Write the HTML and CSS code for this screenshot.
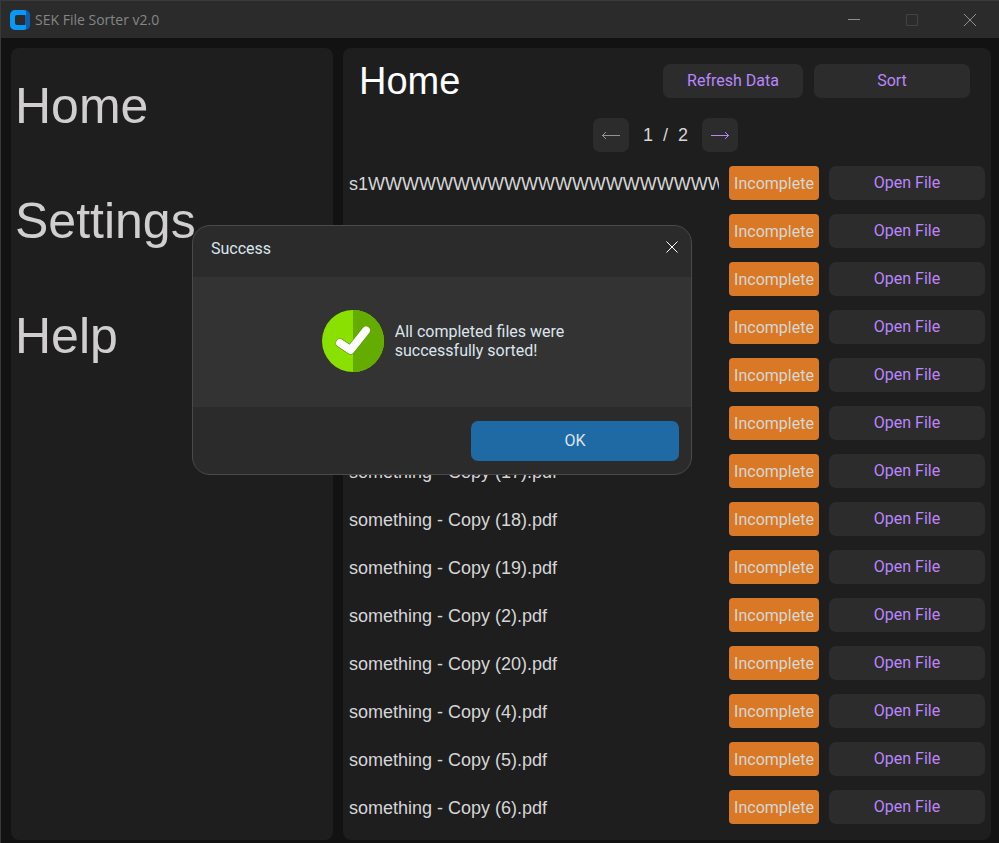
FILE: index.html
```html
<!DOCTYPE html>
<html lang="en">
<head>
<meta charset="utf-8">
<title>SEK File Sorter v2.0</title>
<link rel="stylesheet" href="styles.css">
</head>
<body>
<div class="window">
  <header class="titlebar">
    <svg class="logo" viewBox="0 0 20 20" aria-hidden="true">
      <path d="M12 0h3a5 5 0 0 1 5 5v10a5 5 0 0 1-5 5h-3z" fill="#0b5fae"/>
      <path d="M5 0h9a2 2 0 0 1 2 2v2.500a1 1 0 0 1-1 1v9a1 1 0 0 1 1 1V18a2 2 0 0 1-2 2H5a5 5 0 0 1-5-5V5a5 5 0 0 1 5-5z" fill="#0a98f8"/>
      <path d="M7 5h8v10H7a2 2 0 0 1-2-2V7a2 2 0 0 1 2-2z" fill="#2b2b2b"/>
    </svg>
    <span class="app-name">SEK File Sorter v2.0</span>
    <button class="win-btn" type="button" aria-label="Minimize"><svg viewBox="0 0 12 12"><path d="M0 5.5h12"/></svg></button>
    <button class="win-btn" type="button" aria-label="Maximize" disabled><svg viewBox="0 0 12 12"><path d="M.5.5h11v11H.5z"/></svg></button>
    <button class="win-btn" type="button" aria-label="Close"><svg viewBox="0 0 12 12"><path d="M0 0l12 12M12 0L0 12"/></svg></button>
  </header>
  <div class="content">
    <nav class="sidebar">
      <a href="#home">Home</a>
      <a href="#settings">Settings</a>
      <a href="#help">Help</a>
    </nav>
    <main class="main">
      <div class="toolbar">
        <h1>Home</h1>
        <button class="btn refresh" type="button">Refresh Data</button>
        <button class="btn" type="button">Sort</button>
      </div>
      <div class="pager">
        <button class="btn page" type="button" aria-label="Previous page" disabled><svg viewBox="0 0 18 8"><path d="M0 4.5h18M4 1L.5 4.5 4 8"/></svg></button>
        <span>1&nbsp; /&nbsp; 2</span>
        <button class="btn page" type="button" aria-label="Next page"><svg viewBox="0 0 18 8"><path d="M0 4.5h18M14 1l3.5 3.5L14 8"/></svg></button>
      </div>
      <ul class="files">
        <li><span class="name">s1WWWWWWWWWWWWWWWWWWWWWWWW</span><span class="status">Incomplete</span><button class="btn" type="button">Open File</button></li>
        <li><span class="name">something - Copy (12).pdf</span><span class="status">Incomplete</span><button class="btn" type="button">Open File</button></li>
        <li><span class="name">something - Copy (13).pdf</span><span class="status">Incomplete</span><button class="btn" type="button">Open File</button></li>
        <li><span class="name">something - Copy (14).pdf</span><span class="status">Incomplete</span><button class="btn" type="button">Open File</button></li>
        <li><span class="name">something - Copy (15).pdf</span><span class="status">Incomplete</span><button class="btn" type="button">Open File</button></li>
        <li><span class="name">something - Copy (16).pdf</span><span class="status">Incomplete</span><button class="btn" type="button">Open File</button></li>
        <li><span class="name">something - Copy (17).pdf</span><span class="status">Incomplete</span><button class="btn" type="button">Open File</button></li>
        <li><span class="name">something - Copy (18).pdf</span><span class="status">Incomplete</span><button class="btn" type="button">Open File</button></li>
        <li><span class="name">something - Copy (19).pdf</span><span class="status">Incomplete</span><button class="btn" type="button">Open File</button></li>
        <li><span class="name">something - Copy (2).pdf</span><span class="status">Incomplete</span><button class="btn" type="button">Open File</button></li>
        <li><span class="name">something - Copy (20).pdf</span><span class="status">Incomplete</span><button class="btn" type="button">Open File</button></li>
        <li><span class="name">something - Copy (4).pdf</span><span class="status">Incomplete</span><button class="btn" type="button">Open File</button></li>
        <li><span class="name">something - Copy (5).pdf</span><span class="status">Incomplete</span><button class="btn" type="button">Open File</button></li>
        <li><span class="name">something - Copy (6).pdf</span><span class="status">Incomplete</span><button class="btn" type="button">Open File</button></li>
      </ul>
    </main>
  </div>
</div>
<section class="dialog" role="dialog" aria-labelledby="dialog-title">
  <div class="dialog-head">
    <h2 id="dialog-title">Success</h2>
    <button class="close" type="button" aria-label="Close dialog"><svg viewBox="0 0 12 12"><path d="M.5.5l11 11M11.5.5l-11 11"/></svg></button>
  </div>
  <div class="dialog-body">
    <svg class="check" viewBox="0 0 62 62" aria-hidden="true">
      <circle cx="31" cy="31" r="31" fill="#8ae000"/>
      <path d="M31 0a31 31 0 0 1 0 62z" fill="#64ad00"/>
      <g fill="none" stroke-linecap="round" stroke-linejoin="round">
        <path d="M18 33l10.500 7L44 20.500" stroke="#4f8f00" stroke-width="9"/>
        <path d="M18 33l10.500 7L44 20.500" stroke="#fff" stroke-width="8"/>
      </g>
    </svg>
    <p>All completed files were<br>successfully sorted!</p>
  </div>
  <div class="dialog-foot"><button class="ok" type="button">OK</button></div>
</section>
</body>
</html>
```
FILE: styles.css
```css
* { box-sizing: border-box; }
body {
  margin: 0;
  background: #121212;
  color: #d6d6d6;
  font-family: Roboto, sans-serif;
  font-size: 16px;
}
button { font: inherit; border: 0; padding: 0 0 2px; }
svg { display: block; }

.window {
  display: flex;
  flex-direction: column;
  min-height: 100vh;
  border-left: 1px solid #38393b;
}
.titlebar {
  display: flex;
  align-items: center;
  height: 38px;
  padding-left: 9px;
  background: #2b2b2b;
  border-top: 1px solid #3a3a3a;
}
.logo { width: 20px; height: 20px; }
.app-name {
  flex: 1;
  margin-left: 5px;
  color: #868686;
  font-family: "Open Sans", sans-serif;
  font-size: 14px;
}
.win-btn {
  display: grid;
  place-items: center;
  width: 58px;
  height: 36px;
  padding: 0;
  background: none;
}
.win-btn svg {
  width: 12px;
  height: 12px;
  fill: none;
  stroke: #8e8e8e;
}
.win-btn:disabled svg { stroke: #424242; }

.content {
  flex: 1;
  display: grid;
  grid-template-columns: 322px minmax(0, 1fr);
  gap: 10px;
  padding: 10px 8px 3px 10px;
}
.sidebar, .main { background: #1e1e1e; border-radius: 8px; }
.sidebar {
  display: flex;
  flex-direction: column;
  padding: 29px 4px;
  gap: 57px;
}
.sidebar a {
  color: #d0cece;
  font: 50px/58px "Liberation Sans", sans-serif;
  text-decoration: none;
}
.main { padding: 16px 6px; }
.toolbar {
  display: flex;
  gap: 11px;
  padding: 0 15px 0 10px;
}
h1 {
  flex: 1;
  margin: 0;
  color: #fff;
  font: 38px/34px "Liberation Sans", sans-serif;
}
.btn {
  width: 156px;
  height: 34px;
  background: #2c2c2c;
  color: #bb86fc;
  border-radius: 7px;
}
.btn.refresh { width: 140px; }
.pager {
  display: flex;
  justify-content: center;
  align-items: center;
  gap: 14px;
  margin: 20px 0 14px;
  padding-right: 3px;
  font: 18px/34px "Liberation Sans", sans-serif;
}
.btn.page { display: grid; place-items: center; width: 36px; padding: 0; }
.page svg { width: 18px; height: 8px; fill: none; stroke: #bb86fc; }
.page:disabled svg { stroke: #929292; }

.files {
  display: grid;
  gap: 14px;
  margin: 0;
  padding: 0;
  list-style: none;
}
.files li {
  display: grid;
  grid-template-columns: minmax(0, 1fr) 90px 156px;
  gap: 10px;
}
.name {
  overflow: hidden;
  white-space: nowrap;
  font: 18px/36px "Liberation Sans", sans-serif;
  height: 34px;
}
.status {
  height: 34px;
  background: #d97925;
  border-radius: 4px;
  font-size: 16px;
  line-height: 36px;
  text-align: center;
}

.dialog {
  position: absolute;
  top: 225px;
  left: 192px;
  width: 500px;
  overflow: hidden;
  background: #2b2b2b;
  border: 1px solid #4a4a4a;
  border-radius: 18px;
  color: #dce4ee;
}
.dialog-head {
  display: flex;
  justify-content: space-between;
  align-items: center;
  height: 51px;
  padding: 0 12px 6px 18px;
}
h2 { margin: 0; font-size: 16px; font-weight: 400; }
.close {
  display: grid;
  place-items: center;
  width: 14px;
  height: 18px;
  padding: 0 0 4px;
  background: none;
}
.close svg { width: 12px; height: 12px; stroke: #fff; }
.dialog-body {
  display: flex;
  justify-content: center;
  align-items: center;
  gap: 11px;
  height: 130px;
  padding: 0 0 2px 2px;
  background: #333;
}
.check { width: 62px; height: 62px; }
.dialog-body p { margin: 0; line-height: 19px; }
.dialog-foot {
  display: flex;
  justify-content: flex-end;
  padding: 14px 12px 13px;
}
.ok {
  width: 208px;
  height: 40px;
  background: #1f6aa5;
  border-radius: 7px;
  color: #dce4ee;
}
```
